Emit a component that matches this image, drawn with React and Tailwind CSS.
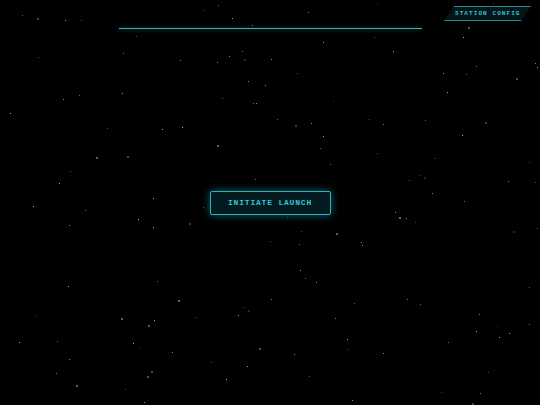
import React from 'react'

// deterministic starfield so every render looks the same
function makeStars(count, seed) {
  let s = seed
  const rand = () => {
    s = (s * 1664525 + 1013904223) % 4294967296
    return s / 4294967296
  }
  const stars = []
  for (let i = 0; i < count; i++) {
    stars.push({
      x: rand() * 540,
      y: rand() * 405,
      size: rand() > 0.85 ? 2 : 1,
      o: 0.3 + rand() * 0.6,
    })
  }
  return stars
}

const STARS = makeStars(150, 42)

const mono = { fontFamily: '"Liberation Mono", "Courier New", monospace' }

export default function App() {
  return (
    <div className="relative h-[405px] w-full overflow-hidden bg-black">
      <div className="pointer-events-none absolute inset-0" aria-hidden="true">
        {STARS.map((star, i) => (
          <span
            key={i}
            className="absolute rounded-full bg-white"
            style={{
              left: star.x,
              top: star.y,
              width: star.size,
              height: star.size,
              opacity: star.o * (star.size === 2 ? 0.6 : 1),
            }}
          />
        ))}
      </div>

      <div className="relative z-10 flex h-full flex-col">
        <div className="flex justify-center pt-[28px]">
          <div className="h-px w-[303px] bg-[#38b6b4] shadow-[0_0_4px_rgba(34,211,238,0.6)]" />
        </div>

        <div className="flex flex-1 items-center justify-center pb-[29px]">
          <button
            className="flex h-[24px] w-[121px] items-center justify-center rounded-[2px] border border-[#1fb8c6] bg-[#031a1e] text-[8px] font-bold tracking-[0.1em] text-[#2fc8d6] shadow-[0_0_8px_rgba(34,211,238,0.45)]"
            style={mono}
          >
            INITIATE LAUNCH
          </button>
        </div>

        <div className="absolute right-[14px] top-[6px]">
          <div className="flex h-[15px] w-[77px] -skew-x-[34deg] items-center justify-center border-y border-[#1d8f98] bg-[#041417]">
            <span
              className="skew-x-[34deg] pl-[1px] text-[6px] font-bold tracking-[0.18em] text-[#36c2cf]"
              style={mono}
            >
              STATION CONFIG
            </span>
          </div>
        </div>
      </div>
    </div>
  )
}
